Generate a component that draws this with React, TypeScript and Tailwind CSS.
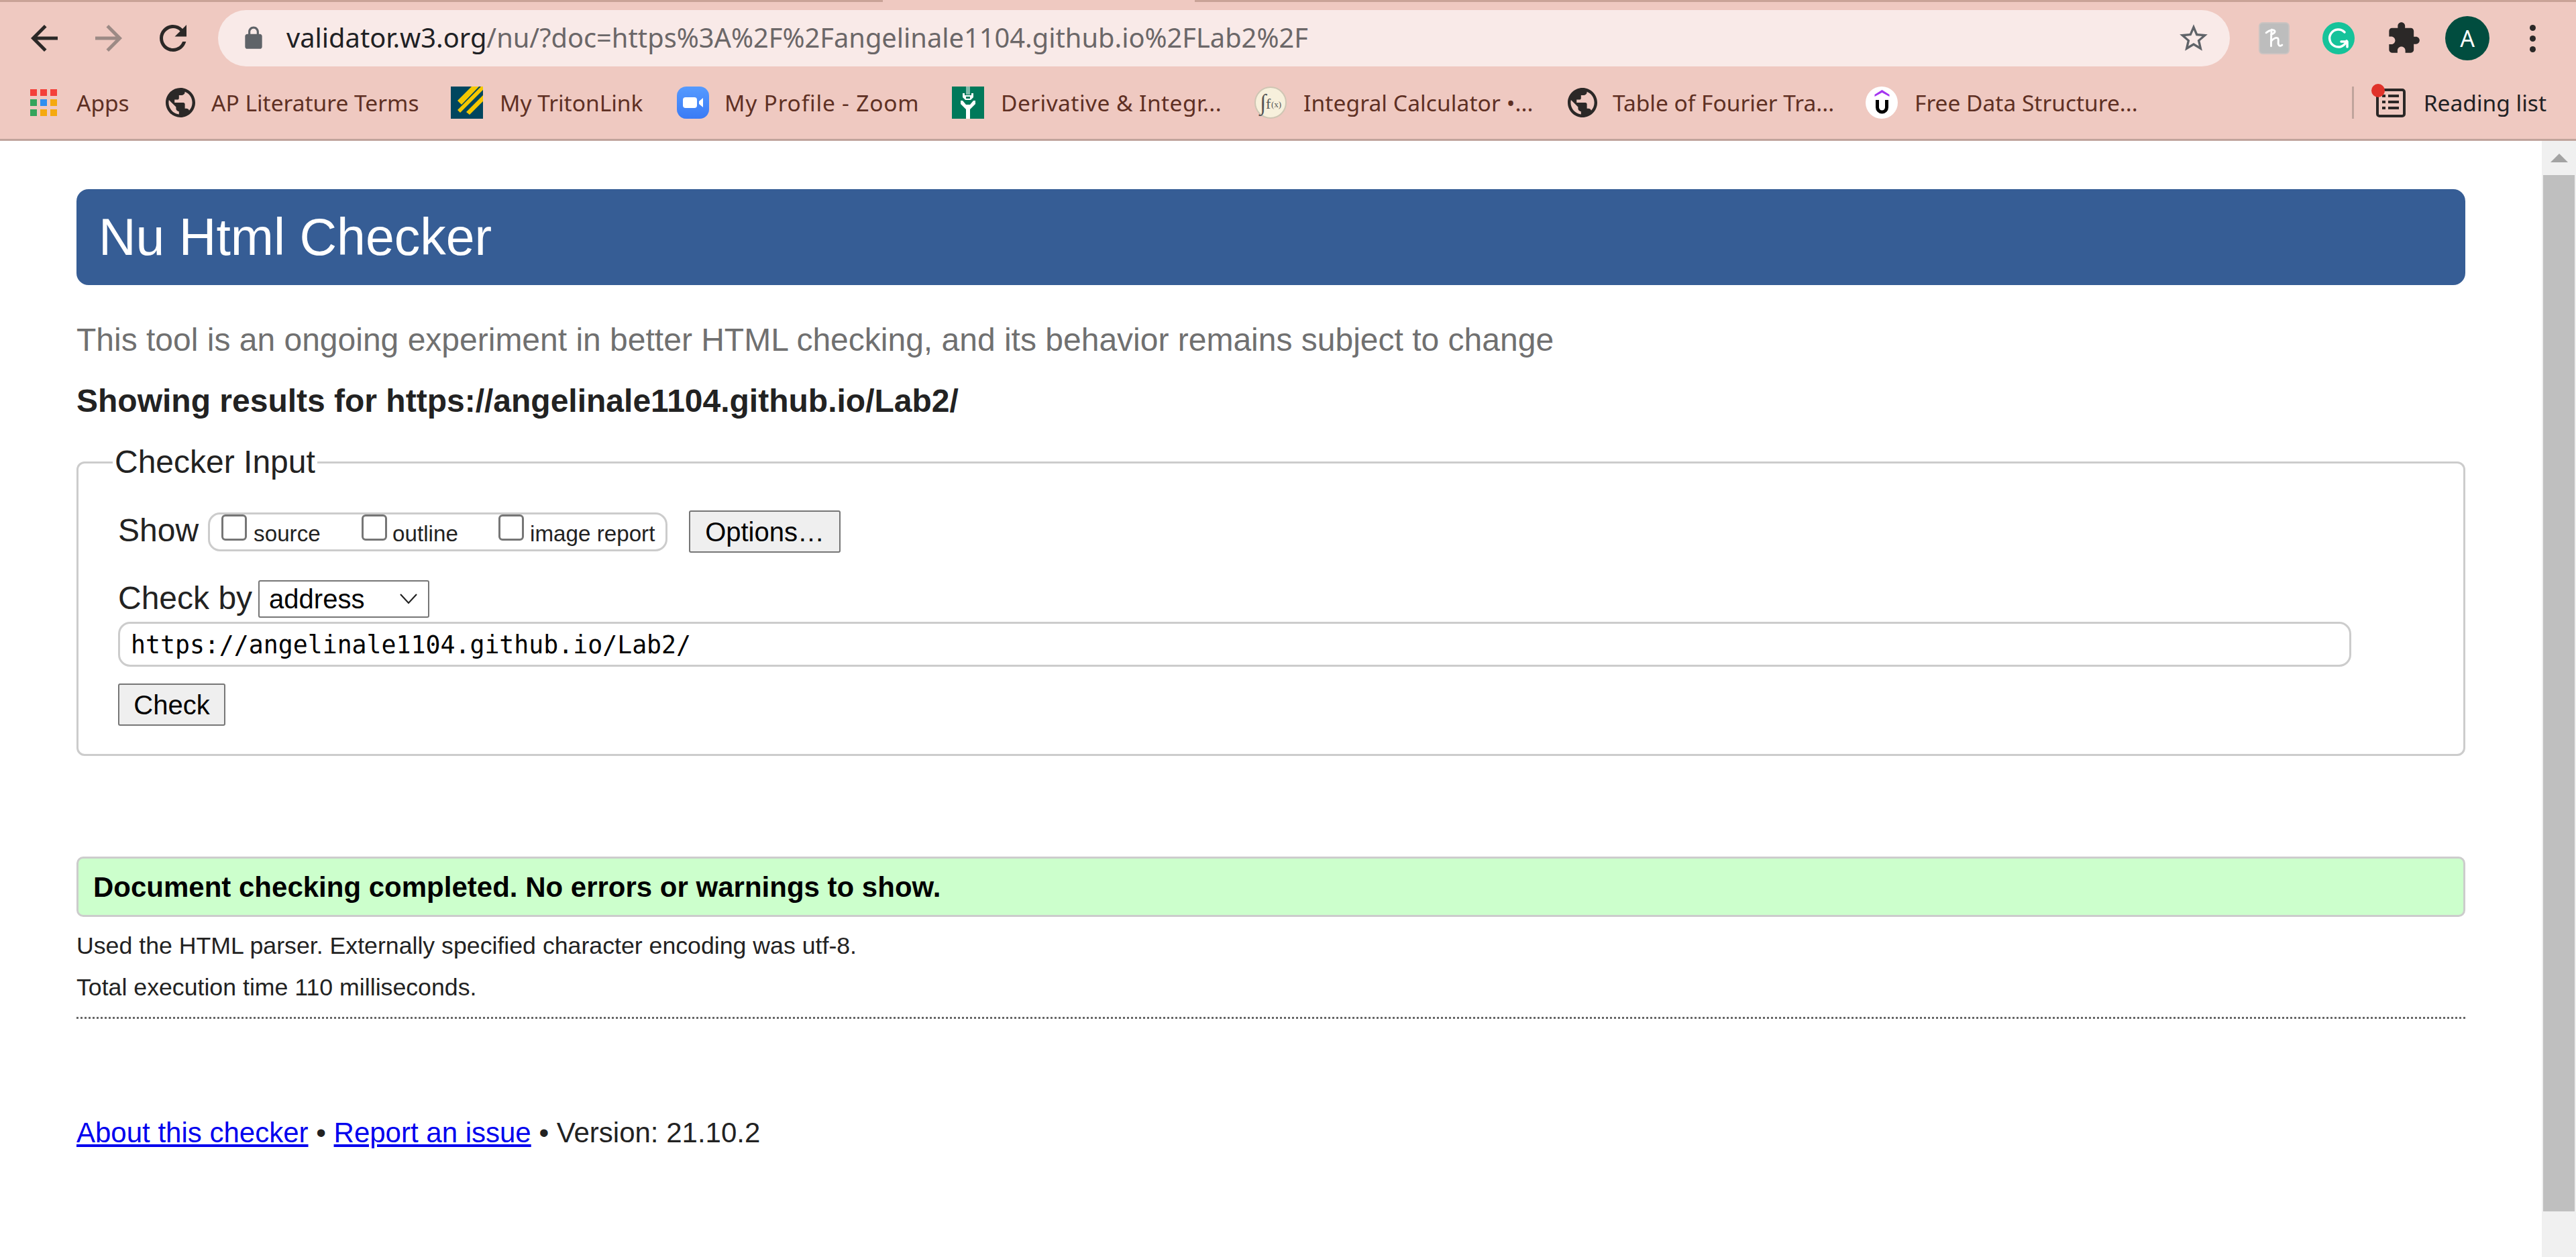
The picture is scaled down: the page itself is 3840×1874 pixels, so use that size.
import React from "react";

const Mat = ({ d, className, fill }: { d: string; className: string; fill: string }) => (
  <svg viewBox="0 0 24 24" className={className} fill={fill} aria-hidden="true">
    <path d={d} />
  </svg>
);

const BACK = "M20 11H7.83l5.59-5.59L12 4l-8 8 8 8 1.41-1.41L7.83 13H20v-2z";
const FORWARD = "M4 11h12.17l-5.59-5.59L12 4l8 8-8 8-1.41-1.41L16.17 13H4v-2z";
const RELOAD = "M17.65 6.35C16.2 4.9 14.21 4 12 4c-4.42 0-7.99 3.58-7.99 8s3.57 8 7.99 8c3.73 0 6.84-2.55 7.73-6h-2.08c-.82 2.33-3.04 4-5.65 4-3.31 0-6-2.69-6-6s2.69-6 6-6c1.66 0 3.14.69 4.22 1.78L13 11h7V4l-2.35 2.35z";
const STAR = "M22 9.24l-7.19-.62L12 2 9.19 8.63 2 9.24l5.46 4.73L5.82 21 12 17.27 18.18 21l-1.63-7.03L22 9.24zM12 15.4l-3.76 2.27 1-4.28-3.32-2.88 4.38-.38L12 6.1l1.71 4.04 4.38.38-3.32 2.88 1 4.28L12 15.4z";
const LOCK = "M18 8h-1V6c0-2.76-2.24-5-5-5S7 3.24 7 6v2H6c-1.1 0-2 .9-2 2v10c0 1.1.9 2 2 2h12c1.1 0 2-.9 2-2V10c0-1.1-.9-2-2-2zM9 6c0-1.66 1.34-3 3-3s3 1.34 3 3v2H9V6z";
const PUZZLE = "M20.5 11H19V7c0-1.1-.9-2-2-2h-4V3.5C13 2.12 11.88 1 10.5 1S8 2.12 8 3.5V5H4c-1.1 0-1.99.9-1.99 2v3.8H3.5c1.49 0 2.7 1.21 2.7 2.7s-1.21 2.7-2.7 2.7H2V20c0 1.1.9 2 2 2h3.8v-1.5c0-1.49 1.21-2.7 2.7-2.7 1.49 0 2.7 1.21 2.7 2.7V22H17c1.1 0 2-.9 2-2v-4h1.5c1.38 0 2.5-1.12 2.5-2.5S21.88 11 20.5 11z";
const PUBLIC = "M12 2C6.48 2 2 6.48 2 12s4.48 10 10 10 10-4.48 10-10S17.52 2 12 2zm-1 17.93c-3.95-.49-7-3.85-7-7.93 0-.62.08-1.21.21-1.79L9 15v1c0 1.1.9 2 2 2v1.93zm6.9-2.54c-.26-.81-1-1.39-1.9-1.39h-1v-3c0-.55-.45-1-1-1H8v-2h2c.55 0 1-.45 1-1V7h2c1.1 0 2-.9 2-2v-.41c2.93 1.19 5 4.06 5 7.41 0 2.08-.8 3.97-2.1 5.39z";

const AppsIcon = () => (
  <div className="grid grid-cols-3 gap-x-[5px] gap-y-[5px] w-[40px]">
    {["#f4403a", "#f4403a", "#f4403a", "#34a45c", "#2f8ff0", "#f5a90f", "#34a45c", "#f5a90f", "#f5a90f"].map((c, i) => (
      <div key={i} className="h-[10px]" style={{ background: c }} />
    ))}
  </div>
);

const Globe = () => (
  <svg viewBox="2 2 20 20" className="w-[44px] h-[44px]" fill="#2b2827" aria-hidden="true">
    <path d={PUBLIC} />
  </svg>
);

const Triton = () => (
  <svg viewBox="0 0 48 48" className="w-[48px] h-[48px]" aria-hidden="true">
    <rect width="48" height="48" fill="#00465f" />
    <path d="M10 21L31 0h11L16 27zM10 35L45 0h3v5L14 39zM23 38L48 13v9L28 42z" fill="#f5c800" />
  </svg>
);

const ZoomIcon = () => (
  <svg viewBox="0 0 48 48" className="w-[48px] h-[48px]" aria-hidden="true">
    <defs>
      <linearGradient id="zoomBlue" x1="0" y1="0" x2="0" y2="1">
        <stop offset="0" stopColor="#559aff" />
        <stop offset="1" stopColor="#3a7bf5" />
      </linearGradient>
    </defs>
    <rect width="48" height="48" rx="14" fill="url(#zoomBlue)" />
    <rect x="9" y="16" width="21" height="16" rx="4" fill="#fff" />
    <path d="M33 22l6-5v14l-6-5z" fill="#fff" />
  </svg>
);

const Deriv = () => (
  <svg viewBox="0 0 48 48" className="w-[48px] h-[48px]" aria-hidden="true">
    <rect width="48" height="48" fill="#00795a" />
    <rect x="21" y="0" width="6" height="12" fill="#7fbcab" />
    <path d="M16 10h3v3h10v-3h3v6l-4 4h-8l-4-4z" fill="#fff" />
    <rect x="21" y="15" width="6" height="3" fill="#00795a" />
    <path d="M13 21h3l5 6h6l5-6h3v5l-8 8v14h-6V34l-8-8z" fill="#fff" />
  </svg>
);

const IntegralIcon = () => (
  <svg viewBox="0 0 48 48" className="w-[48px] h-[48px]" aria-hidden="true">
    <circle cx="24" cy="24" r="23" fill="#f7f0dc" stroke="#cfc6b4" strokeWidth="2" />
    <text x="8" y="35" fontFamily="Liberation Serif, serif" fontSize="34" fill="#555">∫</text>
    <text x="17" y="33" fontFamily="Liberation Serif, serif" fontSize="22" fill="#555">f</text>
    <text x="25" y="31" fontFamily="Liberation Serif, serif" fontSize="13" fill="#555">(x)</text>
  </svg>
);

const Udemy = () => (
  <svg viewBox="0 0 48 48" className="w-[48px] h-[48px]" aria-hidden="true">
    <circle cx="24" cy="24" r="24" fill="#fff" />
    <path d="M24.5 5l11 7v3l-11-6-11 6v-3z" fill="#a435f0" />
    <path d="M17.5 20v11a7 7 0 0 0 14 0V20" fill="none" stroke="#000" strokeWidth="5" />
  </svg>
);

const marks = [
  { label: "AP Literature Terms", icon: <Globe />, cls: "w-[427px]", gap: "w-[22px]", text: "" },
  { label: "My TritonLink", icon: <Triton />, cls: "w-[337px]", gap: "w-[25px]", text: "" },
  { label: "My Profile - Zoom", icon: <ZoomIcon />, cls: "w-[410px]", gap: "w-[23px]", text: "tracking-[0.8px]" },
  { label: "Derivative & Integr...", icon: <Deriv />, cls: "w-[451px]", gap: "w-[25px]", text: "tracking-[0.45px]" },
  { label: "Integral Calculator •...", icon: <IntegralIcon />, cls: "w-[465px]", gap: "w-[25px]", text: "tracking-[0.1px]" },
  { label: "Table of Fourier Tra...", icon: <Globe />, cls: "w-[446px]", gap: "w-[21px]", text: "" },
  { label: "Free Data Structure...", icon: <Udemy />, cls: "w-[500px]", gap: "w-[25px]", text: "" },
];

const Browser = () => (
  <header className="bg-[#efc9c1] h-[210px] flex flex-col border-b-[3px] border-[#c0a49c] font-['Noto_Sans',sans-serif]">
    <div className="flex h-[3px] shrink-0">
      <div className="w-[1316px] bg-[#c9a397]" />
      <div className="w-[465px] bg-[#efc9c1]" />
      <div className="flex-1 bg-[#c9a397]" />
    </div>
    <div className="h-[108px] shrink-0 flex items-start pt-[12px] relative">
      <div className="w-[325px] h-[84px] shrink-0 flex items-center pl-[36px] gap-[36px]">
        <Mat d={BACK} fill="#2b2827" className="w-[60px] h-[60px]" />
        <Mat d={FORWARD} fill="#9c8a85" className="w-[60px] h-[60px]" />
        <Mat d={RELOAD} fill="#2b2827" className="w-[60px] h-[60px]" />
      </div>
      <div className="w-[2999px] h-[84px] bg-[#f9eae8] rounded-[42px] flex items-center shrink-0">
        <Mat d={LOCK} fill="#5f6368" className="w-[38px] h-[38px] ml-[34px] mr-[30px]" />
        <div className="text-[39.8px] leading-none whitespace-nowrap text-[#202124] pb-[2px]">
          validator.w3.org<span className="text-[#6b6768]">/nu/?doc=https%3A%2F%2Fangelinale1104.github.io%2FLab2%2F</span>
        </div>
        <div className="flex-1" />
        <Mat d={STAR} fill="#5f6368" className="w-[50px] h-[50px] mr-[29px]" />
      </div>
      <div className="flex items-center h-[84px] pl-[43px] flex-1">
        <div className="w-[46px] h-[48px] rounded-[6px] bg-[#bdbdbd] border-2 border-[#cbc4c2]">
          <svg viewBox="0 0 46 48" className="w-[42px] h-[44px]" fill="none" stroke="#fff" strokeWidth="3.2" strokeLinecap="round" strokeLinejoin="round" aria-hidden="true">
            <path d="M10 15c5-4 12-6 14-3 1 3-3 5-6 6M19 10c-1 9-1 18-1 27M18 29c3-4 8-7 11-5 2 2 0 7 1 10 1 3 4 3 6 1" />
          </svg>
        </div>
        <div className="w-[48px] h-[48px] ml-[49px] rounded-full bg-[#15c39a] flex items-center justify-center">
          <svg viewBox="0 0 48 48" className="w-[48px] h-[48px]" fill="none" stroke="#fff" strokeWidth="3.5" strokeLinecap="round" strokeLinejoin="round" aria-hidden="true">
            <path d="M33 15a13 13 0 1 0 3 13" />
            <path d="M28 29h9v8" />
          </svg>
        </div>
        <Mat d={PUZZLE} fill="#2b2827" className="w-[52px] h-[52px] ml-[47px]" />
        <div className="w-[66px] h-[66px] ml-[36px] rounded-full bg-[#014d3f] flex items-center justify-center text-white text-[34px] leading-none">A</div>
        <div className="ml-[60px] flex flex-col gap-[7px]">
          <div className="w-[9px] h-[9px] rounded-full bg-[#2b2827]" />
          <div className="w-[9px] h-[9px] rounded-full bg-[#2b2827]" />
          <div className="w-[9px] h-[9px] rounded-full bg-[#2b2827]" />
        </div>
      </div>
    </div>
    <div className="flex items-start h-[48px] mt-[18px] pl-[45px] text-[33.5px] leading-[48px] text-[#5e3024] whitespace-nowrap">
      <div className="w-[200px] flex items-center shrink-0 h-[48px]">
        <AppsIcon />
        <span className="ml-[29px]">Apps</span>
      </div>
      {marks.map((m) => (
        <div key={m.label} className={`${m.cls} flex items-center shrink-0 h-[48px]`}>
          <div className="w-[48px] h-[48px] flex items-center justify-center shrink-0">{m.icon}</div>
          <div className={`${m.gap} shrink-0`} />
          <span className={m.text}>{m.label}</span>
        </div>
      ))}
      <div className="flex-1" />
      <div className="w-[3px] h-[48px] bg-[#c0a49c]" />
      <div className="relative ml-[33px] h-[48px] flex items-center">
        <svg viewBox="0 0 44 44" className="w-[44px] h-[44px]" aria-hidden="true">
          <rect x="2" y="3" width="40" height="39" rx="3" fill="none" stroke="#2b2827" strokeWidth="4" />
          <path d="M9 10h5v4H9zM18 10h16v4H18zM9 19h5v4H9zM18 19h16v4H18zM9 28h5v4H9zM18 28h16v4H18z" fill="#2b2827" />
        </svg>
        <div className="absolute -left-[7px] -top-[4px] w-[20px] h-[20px] rounded-full bg-[#e0322a]" />
      </div>
      <span className="ml-[27px] mr-[44px] text-[#202124]">Reading list</span>
    </div>
  </header>
);

const Scrollbar = () => (
  <aside className="w-[51px] shrink-0 bg-[#f0f0f0] flex flex-col items-center">
    <div className="h-[51px] w-full flex items-center justify-center shrink-0">
      <div className="w-0 h-0 border-l-[13px] border-r-[13px] border-b-[13px] border-l-transparent border-r-transparent border-b-[#a3a3a3]" />
    </div>
    <div className="w-[47px] h-[1545px] bg-[#bfbfbf]" />
  </aside>
);

const Checkbox = () => (
  <span className="w-[38px] h-[39px] shrink-0 bg-white border-[3px] border-[#767676] rounded-[6px] self-start" />
);

const Page = () => (
  <main className="flex-1 min-w-0 bg-white font-['Liberation_Sans',Arial,sans-serif] text-[#222] pl-[114px] pr-[114px] pt-[72px]">
    <h1 className="h-[143px] bg-[#365d95] text-white rounded-[18px] text-[77px] leading-[143px] pl-[33px]">Nu Html Checker</h1>
    <p className="text-[48px] leading-[60px] text-[#707070] mt-[52px]">This tool is an ongoing experiment in better HTML checking, and its behavior remains subject to change</p>
    <p className="text-[48px] leading-[60px] font-bold mt-[31px]">Showing results for https://angelinale1104.github.io/Lab2/</p>

    <section className="relative mt-[60px] h-[439px] border-[3px] border-[#ccc] rounded-[12px] pl-[59px]">
      <span className="absolute left-[51px] -top-[32px] bg-white px-[3px] text-[48px] leading-[60px]">Checker Input</span>
      <div className="flex items-center h-[63px] mt-[70px]">
        <span className="text-[48px] leading-none pb-[3px]">Show</span>
        <div className="ml-[14px] w-[685px] h-[58px] border-[3px] border-[#ccc] rounded-[18px] flex items-start pl-[17px] text-[33.2px]">
          <Checkbox />
          <span className="ml-[10px] w-[161px] leading-[56px] mt-[1px]">source</span>
          <Checkbox />
          <span className="ml-[8px] w-[158px] leading-[56px] mt-[1px]">outline</span>
          <Checkbox />
          <span className="ml-[9px] leading-[56px] mt-[1px]">image report</span>
        </div>
        <button className="ml-[32px] w-[226px] h-[63px] bg-[#efefef] border-2 border-[#767676] rounded-[3px] text-[40px] text-black leading-none">Options…</button>
      </div>
      <div className="flex items-center h-[56px] mt-[41px]">
        <span className="text-[48px] leading-none pb-[3px]">Check by</span>
        <div className="ml-[9px] w-[255px] h-[56px] bg-white border-2 border-[#767676] rounded-[3px] flex items-center pl-[14px] text-[40px] text-black relative">
          <span className="leading-none">address</span>
          <svg viewBox="0 0 26 16" className="absolute right-[16px] top-[18px] w-[26px] h-[16px]" fill="none" stroke="#222" strokeWidth="2.2" aria-hidden="true">
            <path d="M1 1l12 13 12-13" />
          </svg>
        </div>
      </div>
      <div className="mt-[6px] w-[3329px] h-[67px] border-[3px] border-[#ccc] rounded-[18px] flex items-center pl-[16px] pt-[4px] font-['DejaVu_Sans_Mono',monospace] text-[36.5px] text-black">
        https://angelinale1104.github.io/Lab2/
      </div>
      <button className="block mt-[25px] w-[160px] h-[63px] bg-[#efefef] border-2 border-[#767676] rounded-[3px] text-[40px] text-black leading-none">Check</button>
    </section>

    <div className="mt-[150px] h-[90px] bg-[#ccffcc] border-[3px] border-[#ccc] rounded-[10px] flex items-center pl-[22px] text-[42px] font-bold text-black">
      Document checking completed. No errors or warnings to show.
    </div>
    <p className="text-[35.7px] leading-[62px] mt-[12px]">Used the HTML parser. Externally specified character encoding was utf-8.</p>
    <p className="text-[35.7px] leading-[62px]">Total execution time 110 milliseconds.</p>
    <div className="h-[3px] mt-[13px] bg-[repeating-linear-gradient(90deg,#666_0_3px,transparent_3px_6px)]" />
    <p className="text-[42px] leading-[60px] mt-[140px]">
      <a className="text-[#0000ee] underline">About this checker</a> • <a className="text-[#0000ee] underline">Report an issue</a> • Version: 21.10.2
    </p>
  </main>
);

export default function App() {
  return (
    <div className="w-[3840px] h-[1874px] flex flex-col overflow-hidden bg-white">
      <Browser />
      <div className="flex flex-1 min-h-0">
        <Page />
        <Scrollbar />
      </div>
    </div>
  );
}
